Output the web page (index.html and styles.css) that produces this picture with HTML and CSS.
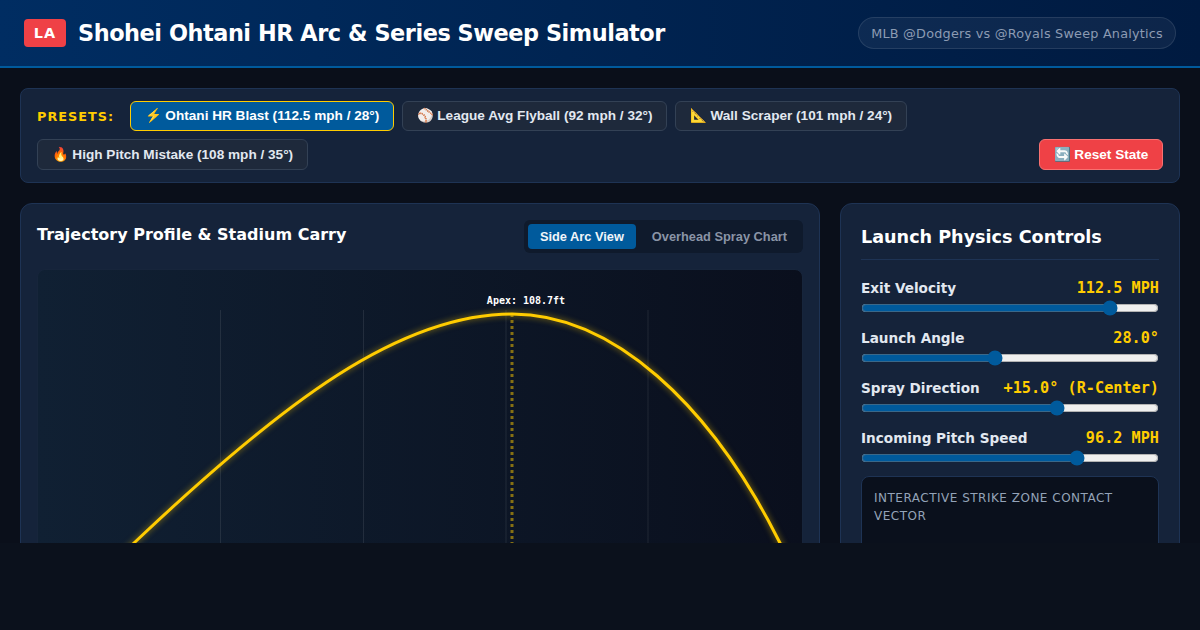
FILE: index.html
```html
<!DOCTYPE html>
<html lang="en">
<head>
<meta charset="utf-8">
<title>Shohei Ohtani HR Arc &amp; Series Sweep Simulator</title>
<link rel="stylesheet" href="styles.css">
</head>
<body>
<div class="app">
  <header class="topbar">
    <div class="brand">
      <span class="badge">LA</span>
      <h1 class="title">Shohei Ohtani HR Arc &amp; Series Sweep Simulator</h1>
    </div>
    <div class="pill">MLB @Dodgers vs @Royals Sweep Analytics</div>
  </header>
  <main class="main">
    <section class="presets">
      <span class="presets-label">PRESETS:</span>
      <button class="preset active">⚡ Ohtani HR Blast (112.5 mph / 28°)</button>
      <button class="preset">⚾ League Avg Flyball (92 mph / 32°)</button>
      <button class="preset">📐 Wall Scraper (101 mph / 24°)</button>
      <button class="preset">🔥 High Pitch Mistake (108 mph / 35°)</button>
      <button class="reset">🔄 Reset State</button>
    </section>
    <div class="columns">
      <section class="panel chart-panel">
        <div class="chart-head">
          <h2 class="chart-title">Trajectory Profile &amp; Stadium Carry</h2>
          <div class="tabs">
            <button class="tab on">Side Arc View</button>
            <button class="tab">Overhead Spray Chart</button>
          </div>
        </div>
        <div class="chart">
          <svg class="chart-svg" viewBox="37 269 766 400" width="766" height="400">
            <g class="grid">
              <line x1="220.5" y1="310" x2="220.5" y2="669"/>
              <line x1="363.5" y1="310" x2="363.5" y2="669"/>
              <line x1="506" y1="310" x2="506" y2="669"/>
              <line x1="648" y1="310" x2="648" y2="669"/>
            </g>
            <line class="apex-line" x1="512" y1="314" x2="512" y2="669"/>
            <path class="arc" d="M115 561 L134 543 C284 401 400 314 512 314 C612 314 710 403 780 543 L790 563"/>
            <text class="apex-label" x="526" y="304">Apex: 108.7ft</text>
          </svg>
        </div>
      </section>
      <aside class="panel controls">
        <h2 class="controls-title">Launch Physics Controls</h2>
        <div class="control">
          <div class="control-row"><span class="control-name">Exit Velocity</span><span class="control-value">112.5 MPH</span></div>
          <input class="slider" type="range" min="40" max="125" step="0.1" value="112.5">
        </div>
        <div class="control">
          <div class="control-row"><span class="control-name">Launch Angle</span><span class="control-value">28.0°</span></div>
          <input class="slider" type="range" min="-10" max="75" step="0.1" value="28">
        </div>
        <div class="control">
          <div class="control-row"><span class="control-name">Spray Direction</span><span class="control-value">+15.0° (R-Center)</span></div>
          <input class="slider" type="range" min="-45" max="45" step="0.1" value="15">
        </div>
        <div class="control control-last">
          <div class="control-row"><span class="control-name">Incoming Pitch Speed</span><span class="control-value">96.2 MPH</span></div>
          <input class="slider" type="range" min="70" max="105.5" step="0.1" value="96.2">
        </div>
        <div class="zone">
          <div class="zone-title">INTERACTIVE STRIKE ZONE CONTACT VECTOR</div>
        </div>
      </aside>
    </div>
  </main>
</div>
</body>
</html>
```
FILE: styles.css
```css
* { box-sizing: border-box; }
html, body { margin: 0; padding: 0; background: #0b111c; }
body { font-family: "DejaVu Sans", sans-serif; color: #fff; height: 630px; overflow: hidden; }
.app { height: 543px; overflow: hidden; background: #0a0f1a; }
.topbar {
  height: 68px; display: flex; align-items: center; justify-content: space-between;
  padding: 0 24px; background: linear-gradient(90deg, #002d62, #001a40);
  border-bottom: 2px solid #005a9c;
}
.brand { display: flex; align-items: center; gap: 12px; }
.badge {
  width: 42px; height: 28px; display: flex; align-items: center; justify-content: center;
  background: #ef4146; border-radius: 4px; font-weight: 700; font-size: 14.4px; letter-spacing: 1px;
}
.title { margin: 0; font-size: 22.4px; font-weight: 700; letter-spacing: -0.45px; }
.pill {
  height: 32px; padding: 0 12px; display: flex; align-items: center; font-size: 12.8px; letter-spacing: .22px; color: #8c9bb3;
  background: rgba(255,255,255,.05); border: 1px solid rgba(255,255,255,.1); border-radius: 16px;
}
.main { padding: 20px; }
.presets {
  display: flex; flex-wrap: wrap; align-items: stretch; gap: 8px;
  padding: 12px 16px; background: #15233a; border: 1px solid #1e3354; border-radius: 8px;
}
.presets-label { display: flex; align-items: center; font-weight: 700; font-size: 12.8px; letter-spacing: 1px; color: #ffcc00; margin-right: 8px; }
.preset, .reset { font-family: "Liberation Sans", sans-serif; font-weight: 700; font-size: 13.6px; cursor: pointer; line-height: 16px; }
.tab { font-family: "Liberation Sans", sans-serif; font-weight: 700; font-size: 12.8px; cursor: pointer; }
.preset { padding: 6px 13.6px; background: #1e293b; color: #e2e8f0; border: 1px solid #334155; border-radius: 6px; }
.preset.active { background: #005a9c; color: #fff; border-color: #ffcc00; }
.reset { margin-left: auto; padding: 6.5px 13.6px; background: #ef4146; color: #fff; border: 1px solid #f87171; border-radius: 6px; }
.columns { display: grid; grid-template-columns: 1fr 340px; gap: 20px; margin-top: 20px; align-items: start; }
.panel { background: #15233a; border: 1px solid #1e3354; border-radius: 12px; }
.chart-panel { padding: 16px; }
.chart-head { display: flex; justify-content: space-between; align-items: flex-start; margin-bottom: 16px; }
.chart-title { margin: 0; font-size: 16px; font-weight: 700; line-height: 30px; }
.tabs { display: flex; gap: 4px; padding: 4px; background: #0f1a2c; border-radius: 6px; }
.tab { padding: 5px 12px; height: 25px; background: none; border: 0; border-radius: 4px; color: #8a94a6; line-height: 15px; }
.tab.on { background: #005a9c; color: #f1f5f9; }
.chart { height: 400px; border-radius: 8px; border: 1px solid #17253b; background: linear-gradient(90deg, #102033, #0a0f1d); overflow: hidden; }
.chart-svg { display: block; margin: -1px; }
.grid line { stroke: rgba(255,255,255,.09); stroke-width: 1; }
.apex-line { stroke: #ffcc00; stroke-opacity: .5; stroke-width: 3; stroke-dasharray: 3 3; }
.arc { fill: none; stroke: #ffcc00; stroke-width: 3; filter: drop-shadow(0 0 3px rgba(255,204,0,.6)); }
.apex-label { font-family: "DejaVu Sans Mono", monospace; font-weight: 700; font-size: 10px; fill: #fff; text-anchor: middle; }
.controls { padding: 20px; }
.controls-title { margin: 0 0 18px; padding-bottom: 9px; font-size: 17.6px; font-weight: 700; border-bottom: 1px solid #1e3354; line-height: 26px; }
.control { margin-bottom: 12px; }
.control-last { margin-bottom: 10px; }
.control-row { display: flex; justify-content: space-between; align-items: center; height: 20px; margin-bottom: 1px; }
.control-name { font-size: 13.6px; font-weight: 700; color: #e2e8f0; }
.control-value { font-family: "DejaVu Sans Mono", monospace; font-size: 15.2px; font-weight: 700; color: #ffcc00; }
.slider { display: block; width: 100%; height: 16px; margin: 2px 0; accent-color: #005a9c; }
.zone { padding: 12px; background: #0a101c; border: 1px solid #1e3354; border-radius: 8px; height: 200px; }
.zone-title { font-size: 12px; color: #94a3b8; letter-spacing: .5px; line-height: 18px; }
```
